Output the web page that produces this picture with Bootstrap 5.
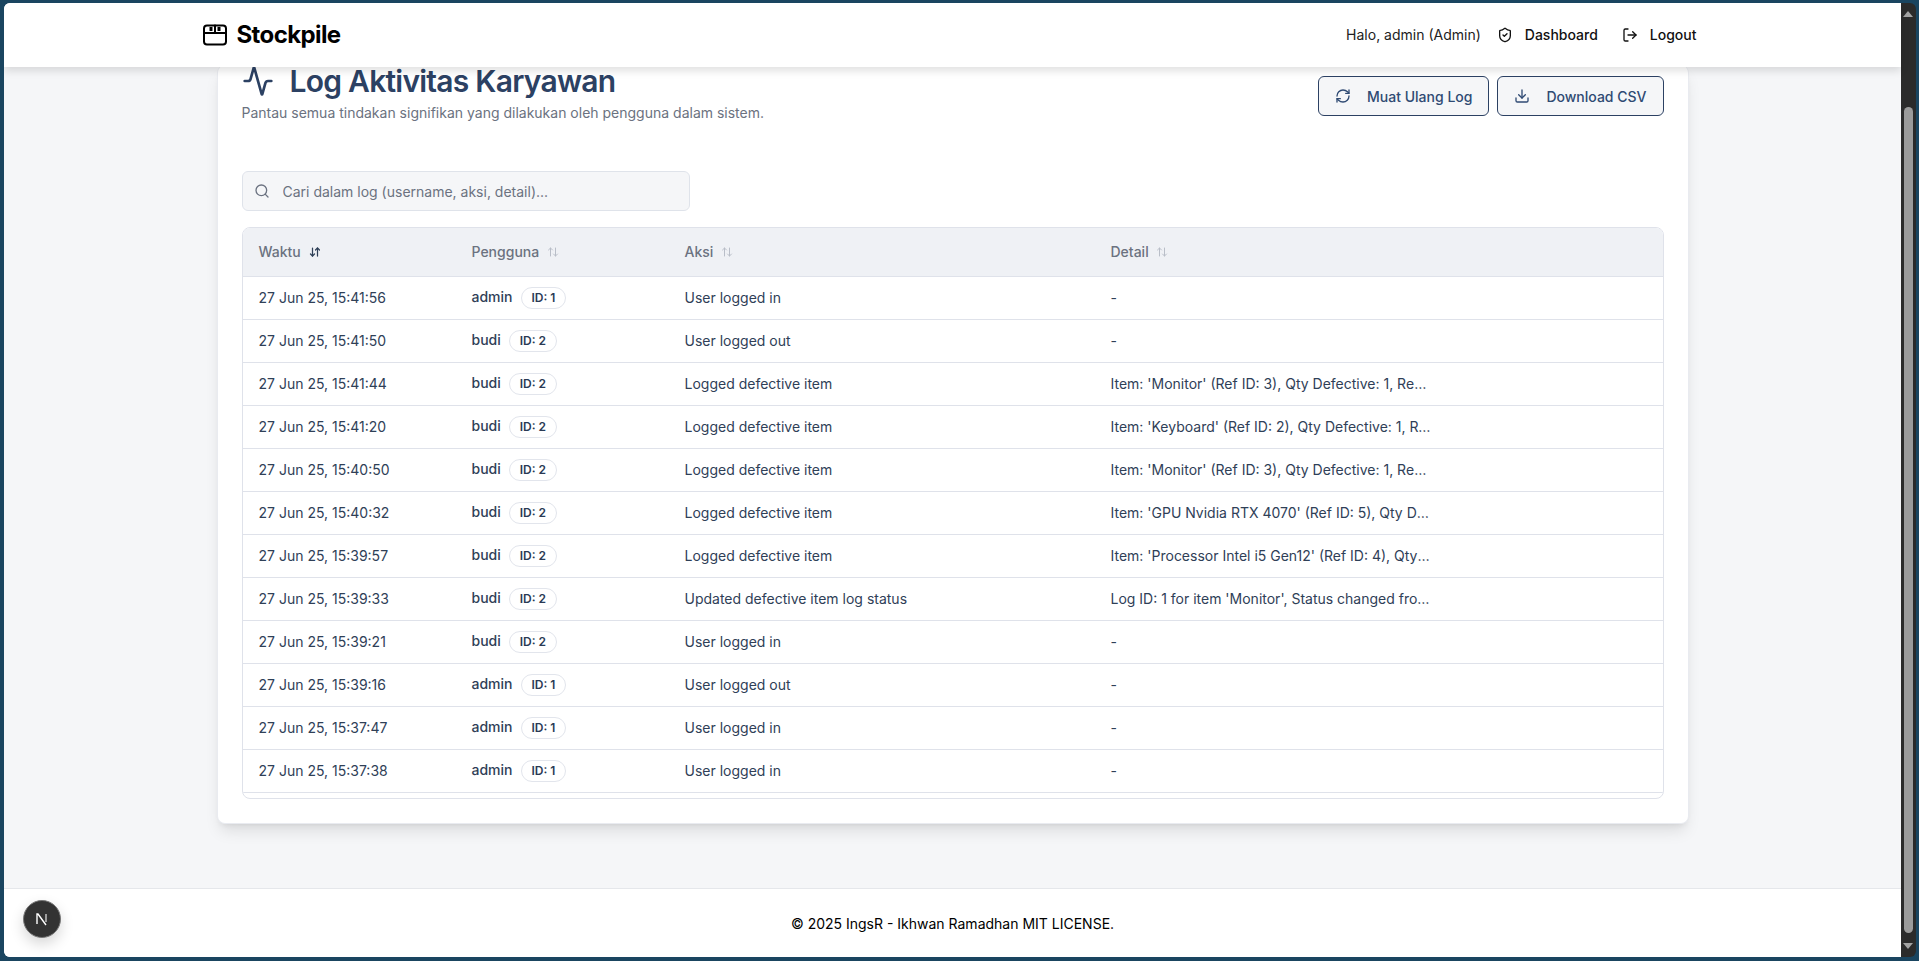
<!DOCTYPE html>
<html lang="en">
<head>
    <meta charset="UTF-8">
    <meta name="viewport" content="width=device-width, initial-scale=1.0">
    <title>Stockpile - Log Aktivitas Karyawan</title>

    <link href="https://cdn.jsdelivr.net/npm/bootstrap@5.3.0/dist/css/bootstrap.min.css" rel="stylesheet">
    <style>
        html, body { height: 100%; overflow: hidden; }
        body {
            background-color: #1a4560;
            font-family: Inter, "Liberation Sans", sans-serif;
            font-size: 14px;
            color: #2f4057;
            padding: 3px 3px 4px 4px;
        }
        .lucide { fill: none; stroke: currentColor; stroke-width: 2; stroke-linecap: round; stroke-linejoin: round; flex-shrink: 0; }

        .app-window { height: 100%; border-radius: 6px; overflow: hidden; position: relative; }
        .app-pane { min-width: 0; background-color: #f5f6f8; }

        .top-bar { height: 64px; background-color: #fff; box-shadow: 0 4px 8px rgba(0, 0, 0, .12); position: relative; z-index: 5; }
        .bar-inner { width: 1536px; margin: 0 auto; height: 100%; padding: 0 24px 0 18px; }
        .brand-link { font-size: 24px; font-weight: 700; color: #000; text-decoration: none; letter-spacing: -.6px; gap: 10px; }
        .nav-link-plain { color: #111; text-decoration: none; gap: 12px; font-weight: 500; padding-bottom: 1px; }
        .hello-text { color: #222; padding-bottom: 1px; }

        .page-main { overflow: hidden; padding-bottom: 65px; }
        .log-panel {
            width: 1472px;
            margin: -2px auto 0;
            padding: 0 24px 24px;
            background-color: #fff;
            border: 1px solid #e9ebf0;
            border-top: 0;
            border-radius: 8px;
            box-shadow: 0 10px 15px -3px rgba(0, 0, 0, .1), 0 4px 6px -4px rgba(0, 0, 0, .1);
        }
        .panel-head { margin-bottom: 48px; }
        .panel-title { font-size: 30px; line-height: 32px; font-weight: 600; letter-spacing: -.75px; color: #2c4163; margin: 0; }
        .panel-sub { color: #6b7280; margin: 6px 0 0; line-height: 20px; }
        .panel-actions { margin-top: 4px; }

        .btn-outline-navy {
            height: 40px;
            padding: 0 16px;
            gap: 16px;
            font-size: 14px;
            font-weight: 500;
            color: #2f4a73;
            background-color: #f5f6f8;
            border: 1px solid #2c4163;
            border-radius: 6px;
        }

        .search-box { width: 448px; height: 40px; margin-bottom: 16px; background-color: #f5f6f8; border: 1px solid #dfe3ea; border-radius: 6px; padding: 0 11px; gap: 11px; color: #6b7280; }
        .search-box input { border: 0; outline: 0; background: transparent; flex-grow: 1; font-size: 14px; color: #2f4057; }
        .search-box input::placeholder { color: #6b7280; opacity: 1; }

        .log-wrap { height: 572px; overflow: hidden; border: 1px solid #dfe2ea; border-radius: 8px; }
        .log-table { table-layout: fixed; margin: 0; font-size: 14px; color: #2f4057; }
        .log-table th, .log-table td { padding: 0 16px; vertical-align: middle; border-bottom: 1px solid #dfe2ea; background: transparent; color: inherit; box-shadow: none; }
        .log-table td { padding-bottom: 1px; }
        .log-table thead tr { height: 48px; background-color: #eff1f5; }
        .log-table thead th { color: #6b7280; font-weight: 500; }
        .log-table tbody tr { height: 43px; }
        .sort-icon { margin-left: 4px; color: #b9bec8; vertical-align: -1px; }
        .sort-icon.sort-on { color: #2f4057; stroke-width: 2.5; }
        .user-name { font-weight: 500; }
        .id-pill { margin-left: 8px; padding: 0 10px; height: 22px; line-height: 20px; display: inline-block; border: 1px solid #e2e5ec; border-radius: 50rem; font-size: 12px; font-weight: 600; color: #2a3a55; }
        .detail-cut { max-width: 320px; overflow: hidden; white-space: nowrap; text-overflow: ellipsis; }

        .page-foot { height: 69px; background-color: #fff; border-top: 1px solid #e5e7eb; color: #000; flex-shrink: 0; }

        .next-badge { position: absolute; left: 19px; bottom: 19px; width: 38px; height: 38px; border-radius: 50%; background-color: #333; border: 1.5px solid #777; box-shadow: 0 6px 14px rgba(0, 0, 0, .16); z-index: 10; }

        .fake-scroll { width: 15px; background-color: #2b2b2b; flex-shrink: 0; position: relative; }
        .fake-scroll .arrow-up { position: absolute; top: 8px; left: 2px; width: 0; height: 0; border: 5px solid transparent; border-top: 0; border-bottom: 6px solid #a3a3a3; }
        .fake-scroll .arrow-down { position: absolute; bottom: 8px; left: 2px; width: 0; height: 0; border: 5px solid transparent; border-bottom: 0; border-top: 6px solid #a3a3a3; }
        .fake-scroll .thumb { position: absolute; top: 104px; left: 3px; width: 9px; height: 826px; border-radius: 5px; background-color: #9b9b9b; }
    </style>
</head>
<body>
    <svg width="0" height="0" class="position-absolute">
        <symbol id="ic-sort" viewBox="0 0 24 24"><path d="m21 16-4 4-4-4"/><path d="M17 20V4"/><path d="m3 8 4-4 4 4"/><path d="M7 4v16"/></symbol>
        <symbol id="ic-sort-on" viewBox="0 0 24 24"><path d="m3 16 4 4 4-4"/><path d="M7 20V4"/><path d="m21 8-4-4-4 4"/><path d="M17 4v16"/></symbol>
    </svg>

    <div class="app-window d-flex">
        <div class="app-pane flex-grow-1 d-flex flex-column">

            <header class="top-bar flex-shrink-0">
                <div class="bar-inner d-flex align-items-center justify-content-between">
                    <a href="#" class="brand-link d-flex align-items-center">
                        <svg class="lucide" width="24" height="22" viewBox="0 0 24 22">
                            <rect x="1" y="1.5" width="22" height="19" rx="3"/>
                            <path d="M1 9h22"/>
                            <path d="M12 1.5V9"/>
                            <path d="M8 3v4M16 3v4" stroke-width="3" stroke-linecap="butt"/>
                        </svg>
                        Stockpile
                    </a>
                    <div class="d-flex align-items-center">
                        <span class="hello-text me-3">Halo, admin (Admin)</span>
                        <div class="d-flex align-items-center gap-4">
                            <a href="#" class="nav-link-plain d-flex align-items-center">
                                <svg class="lucide" width="16" height="16" viewBox="0 0 24 24"><path d="M20 13c0 5-3.5 7.5-7.66 8.95a1 1 0 0 1-.67-.01C7.5 20.5 4 18 4 13V6a1 1 0 0 1 1-1c2 0 4.5-1.2 6.24-2.72a1.17 1.17 0 0 1 1.52 0C14.51 3.81 17 5 19 5a1 1 0 0 1 1 1z"/><path d="m9 12 2 2 4-4"/></svg>
                                Dashboard
                            </a>
                            <a href="#" class="nav-link-plain d-flex align-items-center">
                                <svg class="lucide" width="16" height="16" viewBox="0 0 24 24"><path d="M9 21H5a2 2 0 0 1-2-2V5a2 2 0 0 1 2-2h4"/><path d="m16 17 5-5-5-5"/><path d="M21 12H9"/></svg>
                                Logout
                            </a>
                        </div>
                    </div>
                </div>
            </header>

            <main class="page-main flex-grow-1">
                <section class="log-panel">
                    <div class="panel-head d-flex align-items-center justify-content-between">
                        <div>
                            <h1 class="panel-title d-flex align-items-center">
                                <svg class="lucide me-3" width="32" height="32" viewBox="0 0 24 24"><path d="M22 12h-2.48a2 2 0 0 0-1.93 1.46l-2.35 8.36a.25.25 0 0 1-.48 0L9.24 2.18a.25.25 0 0 0-.48 0l-2.35 8.36A2 2 0 0 1 4.49 12H2"/></svg>
                                Log Aktivitas Karyawan
                            </h1>
                            <p class="panel-sub">Pantau semua tindakan signifikan yang dilakukan oleh pengguna dalam sistem.</p>
                        </div>
                        <div class="panel-actions d-flex gap-2">
                            <button type="button" class="btn btn-outline-navy d-flex align-items-center">
                                <svg class="lucide" width="16" height="16" viewBox="0 0 24 24"><path d="M3 12a9 9 0 0 1 9-9 9.75 9.75 0 0 1 6.74 2.74L21 8"/><path d="M21 3v5h-5"/><path d="M21 12a9 9 0 0 1-9 9 9.75 9.75 0 0 1-6.74-2.74L3 16"/><path d="M8 16H3v5"/></svg>
                                Muat Ulang Log
                            </button>
                            <button type="button" class="btn btn-outline-navy d-flex align-items-center">
                                <svg class="lucide" width="16" height="16" viewBox="0 0 24 24"><path d="M21 15v4a2 2 0 0 1-2 2H5a2 2 0 0 1-2-2v-4"/><path d="m7 10 5 5 5-5"/><path d="M12 15V3"/></svg>
                                Download CSV
                            </button>
                        </div>
                    </div>

                    <div class="search-box d-flex align-items-center">
                        <svg class="lucide" width="16" height="16" viewBox="0 0 24 24"><circle cx="11" cy="11" r="8"/><path d="m21 21-4.3-4.3"/></svg>
                        <input type="text" placeholder="Cari dalam log (username, aksi, detail)...">
                    </div>

                    <div class="log-wrap">
                        <table class="table log-table">
                            <colgroup><col style="width:15%"><col style="width:15%"><col style="width:30%"><col style="width:40%"></colgroup>
                            <thead>
                                <tr>
                                    <th>Waktu <svg class="lucide sort-icon sort-on" width="12" height="12"><use href="#ic-sort-on"/></svg></th>
                                    <th>Pengguna <svg class="lucide sort-icon" width="12" height="12"><use href="#ic-sort"/></svg></th>
                                    <th>Aksi <svg class="lucide sort-icon" width="12" height="12"><use href="#ic-sort"/></svg></th>
                                    <th>Detail <svg class="lucide sort-icon" width="12" height="12"><use href="#ic-sort"/></svg></th>
                                </tr>
                            </thead>
                            <tbody id="logRows"></tbody>
                        </table>
                    </div>
                </section>
            </main>

            <footer class="page-foot d-flex align-items-center justify-content-center">
                © 2025 IngsR - Ikhwan Ramadhan MIT LICENSE.
            </footer>
        </div>

        <div class="fake-scroll">
            <div class="arrow-up"></div>
            <div class="thumb"></div>
            <div class="arrow-down"></div>
        </div>

        <div class="next-badge d-flex align-items-center justify-content-center">
            <svg width="16" height="16" viewBox="0 0 16 16"><path d="M3 13V3h1l8 11" fill="none" stroke="#fff" stroke-width="1.4"/><path d="M12 3v8" fill="none" stroke="#ccc" stroke-width="1.4"/></svg>
        </div>
    </div>

    <script>
        const logs = [
            ["27 Jun 25, 15:41:56", "admin", 1, "User logged in", "-"],
            ["27 Jun 25, 15:41:50", "budi", 2, "User logged out", "-"],
            ["27 Jun 25, 15:41:44", "budi", 2, "Logged defective item", "Item: 'Monitor' (Ref ID: 3), Qty Defective: 1, Reason: Layar rusak saat diterima"],
            ["27 Jun 25, 15:41:20", "budi", 2, "Logged defective item", "Item: 'Keyboard' (Ref ID: 2), Qty Defective: 1, Reason: Tombol tidak berfungsi"],
            ["27 Jun 25, 15:40:50", "budi", 2, "Logged defective item", "Item: 'Monitor' (Ref ID: 3), Qty Defective: 1, Reason: Layar rusak saat diterima"],
            ["27 Jun 25, 15:40:32", "budi", 2, "Logged defective item", "Item: 'GPU Nvidia RTX 4070' (Ref ID: 5), Qty Defective: 1, Reason: Kipas rusak"],
            ["27 Jun 25, 15:39:57", "budi", 2, "Logged defective item", "Item: 'Processor Intel i5 Gen12' (Ref ID: 4), Qty Defective: 1, Reason: Pin bengkok"],
            ["27 Jun 25, 15:39:33", "budi", 2, "Updated defective item log status", "Log ID: 1 for item 'Monitor', Status changed from Pending to Resolved"],
            ["27 Jun 25, 15:39:21", "budi", 2, "User logged in", "-"],
            ["27 Jun 25, 15:39:16", "admin", 1, "User logged out", "-"],
            ["27 Jun 25, 15:37:47", "admin", 1, "User logged in", "-"],
            ["27 Jun 25, 15:37:38", "admin", 1, "User logged in", "-"],
            ["27 Jun 25, 15:37:12", "admin", 1, "User logged out", "-"]
        ];

        document.getElementById("logRows").innerHTML = logs.map(row => `
            <tr>
                <td>${row[0]}</td>
                <td><span class="user-name">${row[1]}</span><span class="id-pill">ID: ${row[2]}</span></td>
                <td>${row[3]}</td>
                <td><div class="detail-cut">${row[4]}</div></td>
            </tr>`).join("");
    </script>

    <script src="https://cdn.jsdelivr.net/npm/bootstrap@5.3.0/dist/js/bootstrap.bundle.min.js"></script>
</body>
</html>
